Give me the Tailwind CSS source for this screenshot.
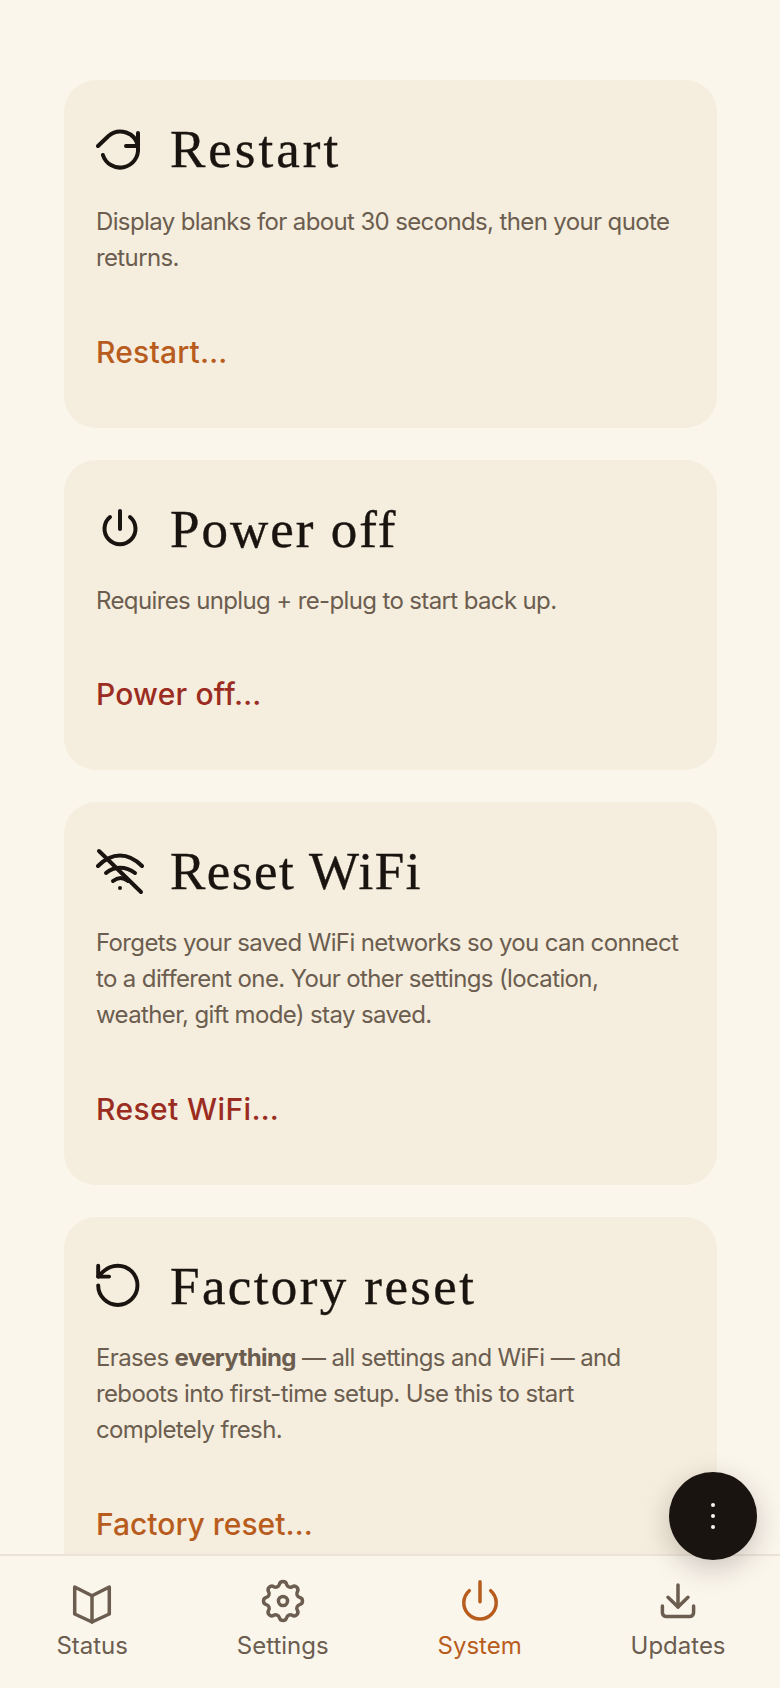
<!DOCTYPE html>
<html lang="en">
<head>
    <meta charset="UTF-8">
    <title>System</title>
    <script src="https://cdn.jsdelivr.net/npm/@tailwindcss/browser@4"></script>
</head>
<body class="bg-[#fbf6ec] font-['Inter',sans-serif]">
    <div class="relative h-[1688px] w-[780px] flex flex-col overflow-hidden">
        <main class="flex-1 overflow-hidden pl-16 pr-[63px] pt-20 flex flex-col gap-8">
            <!-- Restart -->
            <section class="bg-[#f5eddd] rounded-[32px] p-8 shrink-0">
                <div class="flex items-center gap-[26px] h-[74px]">
                    <svg class="w-12 h-12 shrink-0" viewBox="96 125 48 48" fill="none" stroke="#1a1410" stroke-width="4" stroke-linecap="round" stroke-linejoin="round">
                        <path d="M98 146 L108.500 136 A18 18 0 0 1 138 146"/>
                        <path d="M138 133 V146 H126"/>
                        <path d="M138 148 A18 18 0 0 1 102.900 155"/>
                    </svg>
                    <h2 class="font-['Liberation_Serif',serif] text-[53px] leading-none text-[#1a1410] tracking-[3px] [-webkit-text-stroke:0.4px_#1a1410]">Restart</h2>
                </div>
                <p class="mt-[18px] text-[24px] leading-9 tracking-[-0.63px] text-[#6b5d4f]">Display blanks for about 30 seconds, then your quote returns.</p>
                <button class="mt-8 h-[88px] block text-[30px] font-medium tracking-[0.2px] text-[#b85c1e]">Restart…</button>
            </section>
            <!-- Power off -->
            <section class="bg-[#f5eddd] rounded-[32px] p-8 shrink-0">
                <div class="flex items-center gap-[26px] h-[74px]">
                    <svg class="w-12 h-12 shrink-0" viewBox="0 0 24 24" fill="none" stroke="#1a1410" stroke-width="2" stroke-linecap="round" stroke-linejoin="round">
                        <path d="M7 6a7.750 7.750 0 1 0 10 0"/>
                        <path d="M12 3v9"/>
                    </svg>
                    <h2 class="font-['Liberation_Serif',serif] text-[53px] leading-none text-[#1a1410] tracking-[2px] [-webkit-text-stroke:0.4px_#1a1410]">Power off</h2>
                </div>
                <p class="mt-[17px] text-[24px] leading-9 tracking-[-0.63px] text-[#6b5d4f]">Requires unplug + re-plug to start back up.</p>
                <button class="mt-[31px] h-[88px] block text-[30px] font-medium tracking-[0.2px] text-[#9b2c22]">Power off…</button>
            </section>
            <!-- Reset WiFi -->
            <section class="bg-[#f5eddd] rounded-[32px] p-8 shrink-0">
                <div class="flex items-center gap-[26px] h-[74px]">
                    <svg class="w-12 h-12 shrink-0" viewBox="96 847 48 48" fill="none" stroke="#1a1410" stroke-width="4" stroke-linecap="round" stroke-linejoin="round">
                        <path d="M99 851 L141 892"/>
                        <path d="M98 866 C112 852 128 852 142 866"/>
                        <path d="M106 873 C114 866 126 866 135 873"/>
                        <path d="M113 881 C118 877 123 877 128 881"/>
                        <path d="M120 888 v0.100"/>
                    </svg>
                    <h2 class="font-['Liberation_Serif',serif] text-[53px] leading-none text-[#1a1410] tracking-[1.500px] [-webkit-text-stroke:0.4px_#1a1410]">Reset WiFi</h2>
                </div>
                <p class="mt-[17px] text-[24px] leading-9 tracking-[-0.63px] text-[#6b5d4f]">Forgets your saved WiFi networks so you can connect to a different one. Your other settings (location, weather, gift mode) stay saved.</p>
                <button class="mt-8 h-[88px] block text-[30px] font-medium tracking-[0.4px] text-[#9b2c22]">Reset WiFi…</button>
            </section>
            <!-- Factory reset -->
            <section class="bg-[#f5eddd] rounded-[32px] p-8 shrink-0">
                <div class="flex items-center gap-[26px] h-[74px]">
                    <svg class="w-12 h-12 shrink-0" viewBox="2 1.300 22 22" fill="none" stroke="#1a1410" stroke-width="1.800" stroke-linecap="round" stroke-linejoin="round">
                        <path d="M3 12a9 9 0 1 0 9-9 9.750 9.750 0 0 0-6.740 2.740L3 8"/>
                        <path d="M3 3v5h5"/>
                    </svg>
                    <h2 class="font-['Liberation_Serif',serif] text-[53px] leading-none text-[#1a1410] tracking-[2.400px] [-webkit-text-stroke:0.4px_#1a1410]">Factory reset</h2>
                </div>
                <p class="mt-[17px] text-[24px] leading-9 tracking-[-0.63px] text-[#6b5d4f]">Erases <strong class="font-bold">everything</strong> — all settings and WiFi — and reboots into first-time setup. Use this to start completely fresh.</p>
                <button class="mt-8 h-[88px] block text-[30px] font-medium tracking-[0px] text-[#b85c1e]">Factory reset…</button>
            </section>
        </main>

        <nav class="h-[134px] shrink-0 border-t-2 border-[#ebe4d6] bg-[#fbf6ec] flex justify-around pt-[19px] pl-[2px]">
            <a class="flex flex-col items-center gap-[3px] text-[24px] leading-8 text-[#6b5d4f]">
                <svg class="w-[52px] h-[52px]" viewBox="0 0 52 52" fill="none" stroke="#6b5d4f" stroke-width="3.500" stroke-linejoin="round" stroke-linecap="round">
                    <path d="M8.700 12 L26 20.700 L43.300 12 V39 L26 47 L8.700 39 Z"/>
                    <path d="M26 20.700 V47"/>
                </svg>
                Status
            </a>
            <a class="flex flex-col items-center gap-[3px] text-[24px] leading-8 text-[#6b5d4f]">
                <svg class="w-[52px] h-[52px]" viewBox="0 0 24 24" fill="none" stroke="#6b5d4f" stroke-width="1.600" stroke-linejoin="round" stroke-linecap="round">
                    <path d="M10.325 4.317c.426 -1.756 2.924 -1.756 3.35 0a1.724 1.724 0 0 0 2.573 1.066c1.543 -.94 3.31 .826 2.37 2.37a1.724 1.724 0 0 0 1.065 2.572c1.756 .426 1.756 2.924 0 3.35a1.724 1.724 0 0 0 -1.066 2.573c.94 1.543 -.826 3.31 -2.37 2.37a1.724 1.724 0 0 0 -2.572 1.065c-.426 1.756 -2.924 1.756 -3.35 0a1.724 1.724 0 0 0 -2.573 -1.066c-1.543 .94 -3.31 -.826 -2.37 -2.37a1.724 1.724 0 0 0 -1.065 -2.572c-1.756 -.426 -1.756 -2.924 0 -3.35a1.724 1.724 0 0 0 1.066 -2.573c-.94 -1.543 .826 -3.31 2.37 -2.37c1 .608 2.296 .07 2.572 -1.065z"/>
                    <circle cx="12" cy="12" r="2.100"/>
                </svg>
                Settings
            </a>
            <a class="flex flex-col items-center gap-[3px] text-[24px] leading-8 text-[#b85c1e]">
                <svg class="w-[52px] h-[52px]" viewBox="0 0 52 52" fill="none" stroke="#b85c1e" stroke-width="3.500" stroke-linejoin="round" stroke-linecap="round">
                    <path d="M15.300 15.700 A16.200 16.200 0 1 0 36.700 15.700"/>
                    <path d="M26 6.700 V26.700"/>
                </svg>
                System
            </a>
            <a class="flex flex-col items-center gap-[3px] text-[24px] leading-8 text-[#6b5d4f]">
                <svg class="w-[52px] h-[52px]" viewBox="0 0 52 52" fill="none" stroke="#6b5d4f" stroke-width="3.500" stroke-linejoin="round" stroke-linecap="round">
                    <path d="M10.400 31 v6.600 a4 4 0 0 0 4 4 h23.200 a4 4 0 0 0 4 -4 v-6.600"/>
                    <path d="M26 10 V32"/>
                    <path d="M16 22.300 L26 32 L36 22.300"/>
                </svg>
                Updates
            </a>
        </nav>

        <!-- menu button -->
        <button class="absolute right-[23px] bottom-32 w-[88px] h-[88px] rounded-full bg-[#1a1410] shadow-[0_8px_28px_rgba(26,20,16,0.22)] flex flex-col items-center justify-center gap-[7px]">
            <span class="w-1 h-1 rounded-full bg-[#fbf6ec]"></span>
            <span class="w-1 h-1 rounded-full bg-[#fbf6ec]"></span>
            <span class="w-1 h-1 rounded-full bg-[#fbf6ec]"></span>
        </button>
    </div>
</body>
</html>
